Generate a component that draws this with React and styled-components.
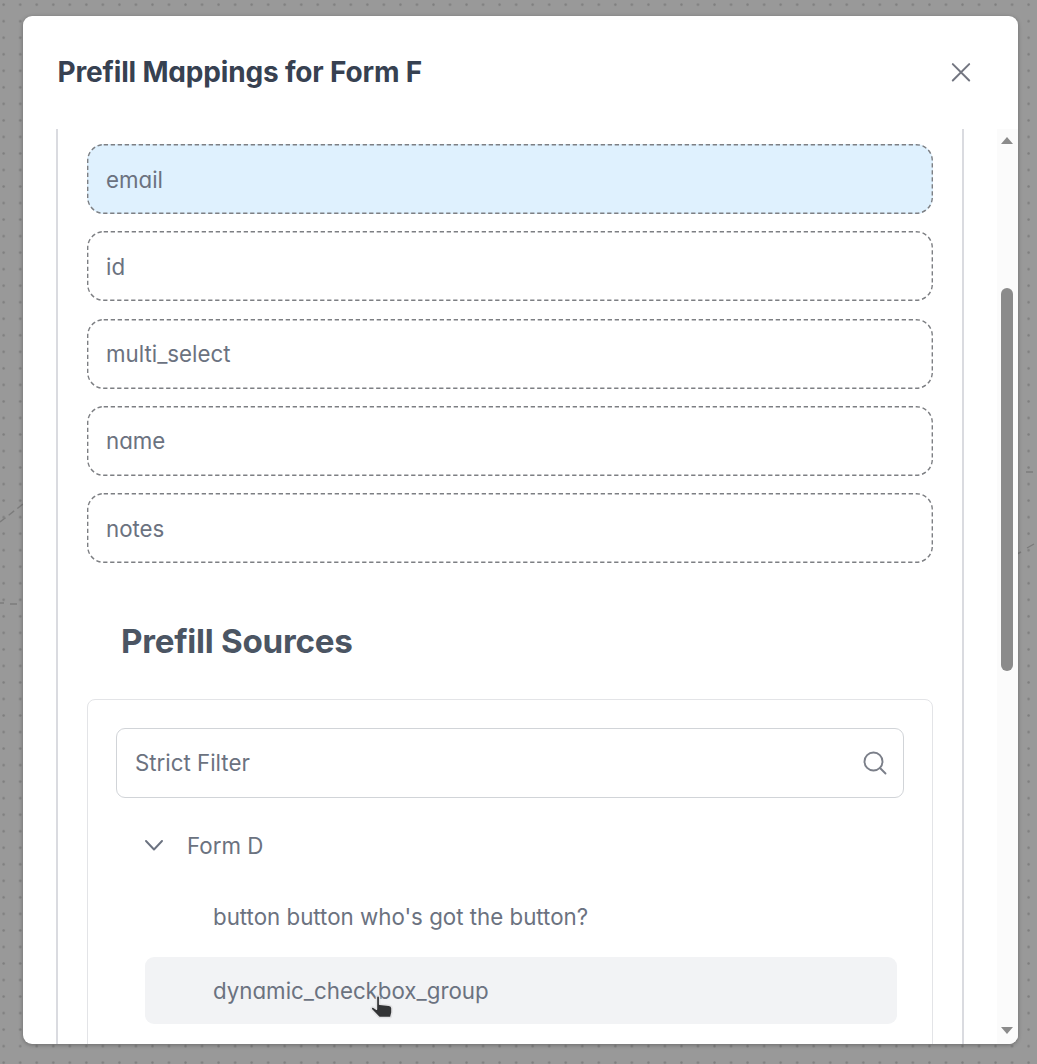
import React from "react";
import styled, { createGlobalStyle } from "styled-components";

const GlobalStyle = createGlobalStyle`
  * { box-sizing: border-box; }
  html, body { margin: 0; height: 100%; overflow: hidden; }
  body {
    font-family: Inter, "Liberation Sans", sans-serif;
    font-feature-settings: "cv11";
    color: #6b7280;
  }
`;

const Canvas = styled.div`
  position: relative;
  height: 1064px;
  padding: 16px 19.5px 19.5px 23px;
  background-color: #999;
  background-image: radial-gradient(circle, #7e7e7e 0.8px, rgba(153, 153, 153, 0) 1.6px);
  background-size: 16.54px 16.54px;
  background-position: -4.6px -3.6px;
`;

const Edges = styled.svg`
  position: absolute;
  inset: 0;
  fill: none;
  stroke: #7c7c7c;
  stroke-width: 1.4;
`;

const Dialog = styled.section`
  position: relative;
  display: flex;
  flex-direction: column;
  height: 1028px;
  background: #fff;
  border-radius: 9px;
  overflow: hidden;
  box-shadow: 0 1px 4px rgba(0, 0, 0, 0.3);
`;

const Header = styled.header`
  display: flex;
  flex: 0 0 112.5px;
  align-items: center;
  justify-content: space-between;
  padding: 0 47px 0 34.5px;
`;

const Title = styled.h1`
  margin: 0;
  color: #374151;
  font-size: 28px;
  line-height: 36px;
  font-weight: 700;
  letter-spacing: -0.17px;
  white-space: nowrap;
`;

const CloseButton = styled.button`
  display: flex;
  padding: 0;
  border: 0;
  background: none;
  color: #737681;
`;

const Body = styled.div`
  display: flex;
  flex: 1;
  min-height: 0;
`;

const Content = styled.div`
  flex: 1;
  min-width: 0;
  padding: 0 33px;
  overflow: hidden;
`;

const Panel = styled.div`
  height: 1100px;
  padding: 15.5px 29px 0;
  border: solid #dadbe0;
  border-width: 0 2px;
`;

const FieldList = styled.div`
  display: flex;
  flex-direction: column;
  gap: 17.25px;
`;

const Field = styled.div`
  position: relative;
  display: flex;
  align-items: center;
  height: 70px;
  padding: 0 19px;
  border-radius: 17px;
  background: ${(p) => (p.$active ? "#dff1fe" : "#fff")};
  font-size: 22.3px;
`;

const Outline = styled.svg`
  position: absolute;
  inset: 0;
  width: 100%;
  height: 100%;
  fill: none;
  stroke: #7d7f83;
  stroke-width: 1.4;
  stroke-dasharray: 4.3 2.7;
`;

const SectionTitle = styled.h2`
  margin: 56px 0 0 34px;
  color: #4b5563;
  font-size: 33.2px;
  line-height: 44px;
  font-weight: 700;
  letter-spacing: -0.28px;
`;

const Sources = styled.div`
  height: 600px;
  margin-top: 35.5px;
  padding: 28px;
  border: 1px solid #e3e4e7;
  border-radius: 8px;
`;

const Search = styled.label`
  display: flex;
  align-items: center;
  justify-content: space-between;
  height: 70px;
  padding: 0 16px 0 18px;
  border: 1px solid #d1d4d8;
  border-radius: 9px;
  font-size: 22.3px;
`;

const Tree = styled.div`
  display: flex;
  flex-direction: column;
  padding: 14.5px 7px 0 29px;
`;

const Row = styled.div`
  display: flex;
  align-items: center;
  flex: 0 0 67px;
  margin-bottom: ${(p) => p.$after || 0}px;
  padding-left: ${(p) => p.$indent || 0}px;
  gap: 24px;
  border-radius: 9px;
  background: ${(p) => (p.$hover ? "#f2f3f5" : "transparent")};
  font-size: 22.3px;
`;

const ScrollTrack = styled.div`
  display: flex;
  flex-direction: column;
  align-items: center;
  width: 20.5px;
  padding: 8.5px 0 10px;
  background: #fbfbfb;
`;

const Arrow = styled.i`
  width: 0;
  height: 0;
  border: solid transparent;
  border-width: 0 6.5px 7px;
  border-bottom-color: #8b8b8b;
  transform: ${(p) => (p.$down ? "rotate(180deg)" : "none")};
`;

const Thumb = styled.div`
  width: 12px;
  height: 383px;
  margin: 143.5px 0 auto;
  border-radius: 6px;
  background: #8b8b8b;
`;

const Pointer = styled.svg`
  position: absolute;
  left: 368px;
  top: 993px;
`;

const fields = ["email", "id", "multi_select", "name", "notes"];

export default function App() {
  return (
    <Canvas>
      <GlobalStyle />
      <Edges width="1037" height="1064">
        <path d="M0 522L23 504" strokeDasharray="7 4" />
        <path d="M0 603L4 603M10 604L17 604M1026 472L1033 472M1017 554L1021 552M1027 548L1034 544" />
      </Edges>
      <Dialog>
        <Header>
          <Title>Prefill Mappings for Form F</Title>
          <CloseButton aria-label="Close">
            <svg width="20" height="20" viewBox="0 0 20 20" fill="none" stroke="currentColor" strokeWidth="2" strokeLinecap="round">
              <path d="M1.8 2.1l16.4 16.4M18.2 2.1L1.8 18.5" />
            </svg>
          </CloseButton>
        </Header>
        <Body>
          <Content>
            <Panel>
              <FieldList>
                {fields.map((name, i) => (
                  <Field key={name} $active={i === 0}>
                    <Outline>
                      <rect x="0.7" y="0.7" width="844.6" height="68.6" rx="16" />
                    </Outline>
                    {name}
                  </Field>
                ))}
              </FieldList>
              <SectionTitle>Prefill Sources</SectionTitle>
              <Sources>
                <Search>
                  <span>Strict Filter</span>
                  <svg width="24" height="24" viewBox="0 0 24 24" fill="none" stroke="#7b7f89" strokeWidth="1.9" strokeLinecap="round">
                    <circle cx="10.5" cy="10.5" r="9" />
                    <path d="M17 17l5.5 5.5" />
                  </svg>
                </Search>
                <Tree>
                  <Row $after={3.5}>
                    <svg width="18" height="11" viewBox="0 0 18 11" fill="none" stroke="#6b7280" strokeWidth="1.9" strokeLinecap="round" strokeLinejoin="round">
                      <path d="M1 1l8 8.5L17 1" />
                    </svg>
                    Form D
                  </Row>
                  <Row $indent={68} $after={7.5}>button button who's got the button?</Row>
                  <Row $indent={68} $hover>dynamic_checkbox_group</Row>
                </Tree>
              </Sources>
            </Panel>
          </Content>
          <ScrollTrack>
            <Arrow />
            <Thumb />
            <Arrow $down />
          </ScrollTrack>
        </Body>
      </Dialog>
      <Pointer width="30" height="30" viewBox="0 0 30 30">
        <path
          d="M8.4 4.5C8.4 2 11.7 2 11.7 4.500V11.200L21 12.200Q24 12.700 24 15.300V19.500L22.800 24.500H11.200L3.700 16.700C2.200 14.900 4.100 13.400 5.800 14.300L8.400 16.200Z"
          fill="#333436"
          stroke="#e3e3e5"
          strokeWidth="1.6"
          strokeLinejoin="round"
        />
      </Pointer>
    </Canvas>
  );
}
